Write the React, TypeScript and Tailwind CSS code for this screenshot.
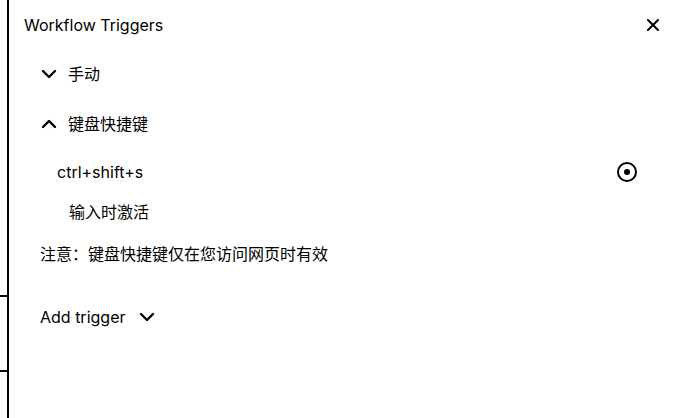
import { ChevronDown, ChevronUp, X } from 'lucide-react';

const font = { fontFamily: 'Inter, "Noto Sans CJK SC", sans-serif' };

export default function App() {
  return (
    <div className="relative h-[418px] w-[675px] overflow-hidden bg-white text-black" style={font}>
      {/* ticks from the page underneath */}
      <div className="absolute left-0 top-[295px] h-[2px] w-[8px] bg-black" />
      <div className="absolute left-0 top-[370px] h-[2px] w-[8px] bg-black" />

      <div className="ml-[7px] flex h-full flex-col border-l-[2px] border-black text-[16px]">
        <div className="flex h-[50px] items-center justify-between pl-[15px] pr-[12px]">
          <span>Workflow Triggers</span>
          <X size={20} strokeWidth={2.5} />
        </div>

        <div className="flex h-[48px] items-center gap-[7px] pl-[28px]">
          <ChevronDown size={24} strokeWidth={2.4} />
          <span>手动</span>
        </div>

        <div className="flex h-[52px] items-center gap-[7px] pl-[28px]">
          <ChevronUp size={24} strokeWidth={2.4} />
          <span>键盘快捷键</span>
        </div>

        <div className="flex h-[44px] items-center justify-between pl-[48px] pr-[37px]">
          <span>ctrl+shift+s</span>
          <svg width="22" height="22" viewBox="0 0 22 22">
            <circle cx="11" cy="11" r="9" fill="none" stroke="black" strokeWidth="2" />
            <circle cx="11" cy="11" r="3" fill="black" />
          </svg>
        </div>

        <div className="flex h-9 items-center pl-[60px]">
          <span>输入时激活</span>
        </div>

        <div className="flex h-12 items-center pl-[31px]">
          <span>注意：键盘快捷键仅在您访问网页时有效</span>
        </div>

        <div className="mt-[19px] flex h-10 items-center gap-[9px] pl-[31px]">
          <span>Add trigger</span>
          <ChevronDown size={24} strokeWidth={2.4} />
        </div>
      </div>
    </div>
  );
}
